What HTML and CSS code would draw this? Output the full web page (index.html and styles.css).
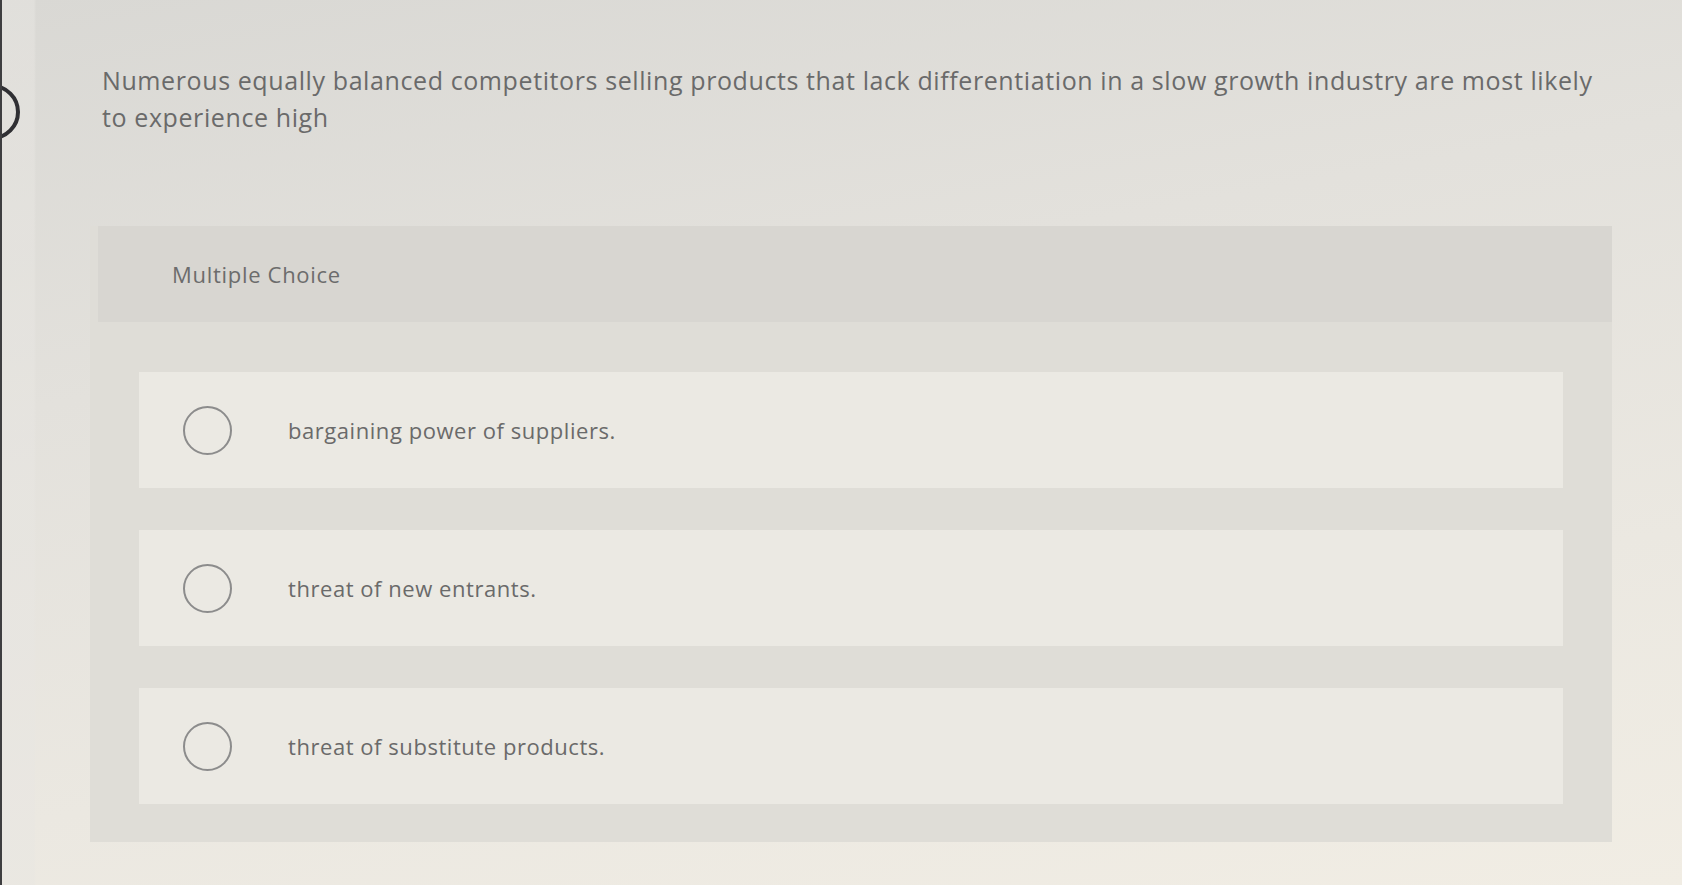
FILE: index.html
```html
<!DOCTYPE html>
<html lang="en">
<head>
<meta charset="utf-8">
<title>Multiple Choice</title>
<link rel="stylesheet" href="styles.css">
</head>
<body>
<div class="screen">
  <div class="edge"><div class="qnum"></div></div>
  <main class="content">
    <p class="question">Numerous equally balanced competitors selling products that lack differentiation in a slow growth industry are most likely to experience high</p>
    <section class="card">
      <header class="card-head">Multiple Choice</header>
      <div class="options">
        <label class="option"><span class="radio"></span><span class="opt-text">bargaining power of suppliers.</span></label>
        <label class="option"><span class="radio"></span><span class="opt-text">threat of new entrants.</span></label>
        <label class="option"><span class="radio"></span><span class="opt-text">threat of substitute products.</span></label>
      </div>
    </section>
  </main>
</div>
</body>
</html>
```

FILE: styles.css
```css
html, body {
  margin: 0;
  padding: 0;
  height: 100%;
}
body {
  font-family: "Open Sans", Lato, "Liberation Sans", sans-serif;
  color: #6a6a6a;
  background: linear-gradient(170deg, #d9d8d4 0%, #e3e1dc 35%, #ebe8e1 70%, #f1ede4 100%);
  overflow: hidden;
}
.screen {
  display: flex;
  height: 885px;
  border-left: 2px solid #3e3e40;
  box-sizing: border-box;
}
.edge {
  width: 100px;
  flex: none;
  padding-top: 84px;
  overflow: hidden;
  background: linear-gradient(90deg, rgba(232,230,226,0.5) 0, rgba(232,230,226,0.5) 32px, rgba(0,0,0,0) 34px);
}
.qnum {
  width: 48px;
  height: 48px;
  margin-left: -38px;
  border: 4px solid #2f2f33;
  border-radius: 50%;
}
.content {
  flex: 1;
  padding-right: 70px;
}
.question {
  margin: 62px 0 0 0;
  font-size: 25px;
  line-height: 37px;
  letter-spacing: 0.6px;
  color: #6a6a6a;
  max-width: 1500px;
}
.card {
  margin: 90px 0 0 -12px;
  width: 1522px;
  height: 616px;
  background: #dfddd7;
}
.card-head {
  height: 96px;
  margin-left: 8px;
  padding-left: 74px;
  display: flex;
  align-items: center;
  font-size: 22px;
  letter-spacing: 0.7px;
  color: #6c6c6c;
  background: #d8d6d1;
}
.options {
  padding: 50px 49px 0 49px;
  display: flex;
  flex-direction: column;
  gap: 42px;
}
.option {
  height: 116px;
  display: flex;
  align-items: center;
  padding-left: 44px;
  background: #ebe9e3;
}
.radio {
  width: 45px;
  height: 45px;
  border: 2px solid #8c8c8c;
  border-radius: 50%;
  flex: none;
}
.opt-text {
  margin-left: 56px;
  font-size: 22px;
  letter-spacing: 0.55px;
  color: #6a6a6a;
}
```
